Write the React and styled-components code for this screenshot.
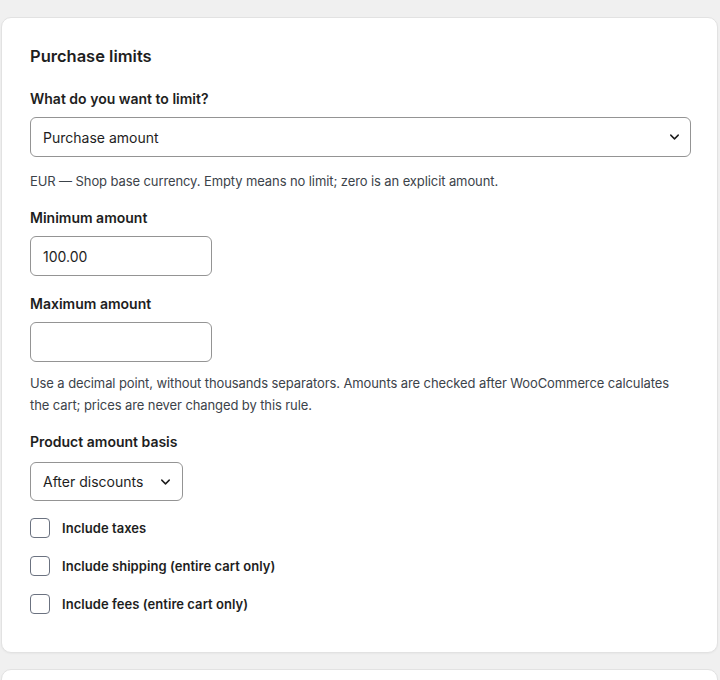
import React from "react";
import styled, { createGlobalStyle } from "styled-components";

const GlobalStyle = createGlobalStyle`
  html, body {
    margin: 0;
    padding: 0;
    background: #f0f0f0;
    font-family: Inter, "Noto Sans", "Liberation Sans", sans-serif;
    color: #1e1e1e;
    -webkit-font-smoothing: antialiased;
  }
  * { box-sizing: border-box; }
`;

const Page = styled.div`
  display: flex;
  flex-direction: column;
  gap: 16px;
  padding: 17px 2px 0 1px;
  height: 680px;
  overflow: hidden;
`;

const Card = styled.section`
  background: #fff;
  border: 1px solid #e2e2e2;
  border-radius: 10px;
  box-shadow: 0 1px 2px rgba(0, 0, 0, 0.04);
  padding: 27px 26px 38px 28px;
  flex-shrink: 0;
  min-height: ${(p) => p.$minHeight || 0}px;
`;

const Title = styled.h2`
  margin: 0 0 22px;
  font-size: 16.5px;
  font-weight: 600;
  line-height: 22px;
  color: #1e1e1e;
`;

const Field = styled.div`
  display: flex;
  flex-direction: column;
  align-items: flex-start;
  margin-bottom: ${(p) => p.$mb ?? 0}px;
`;

const Label = styled.label`
  display: block;
  font-size: 14px;
  font-weight: 600;
  line-height: 20px;
  margin-bottom: ${(p) => p.$mb ?? 8}px;
  color: #1e1e1e;
`;

const SelectBox = styled.div`
  position: relative;
  width: ${(p) => p.$width};
  height: ${(p) => p.$height || 40}px;
  display: flex;
  align-items: center;
  padding: 0 ${(p) => p.$padRight || 40}px 0 12px;
  border: 1px solid #949494;
  border-radius: 6px;
  background: #fff;
  font-size: 14px;
  white-space: nowrap;
  color: #1e1e1e;
`;

const Chevron = styled.svg`
  position: absolute;
  right: ${(p) => p.$right || 10}px;
  top: 50%;
  transform: translateY(-50%);
  width: 15px;
  height: 15px;
`;

const TextInput = styled.input`
  width: 182px;
  height: 40px;
  padding: 0 12px;
  border: 1px solid #949494;
  border-radius: 6px;
  background: #fff;
  font: inherit;
  font-size: 14px;
  color: #1e1e1e;
  outline: none;
`;

const Help = styled.p`
  margin: ${(p) => p.$m || "0"};
  max-width: 650px;
  font-size: 13px;
  line-height: 22px;
  letter-spacing: -0.1px;
  color: #3c434a;
`;

const Checks = styled.div`
  display: flex;
  flex-direction: column;
  gap: 18px;
  margin-top: 17px;
`;

const CheckRow = styled.label`
  display: flex;
  align-items: center;
  gap: 12px;
  font-size: 13px;
  font-weight: 600;
  line-height: 20px;
  letter-spacing: 0.05px;
  color: #1e1e1e;
`;

const Box = styled.span`
  width: 20px;
  height: 20px;
  border: 1.5px solid #6b7280;
  border-radius: 4px;
  background: #fff;
  flex-shrink: 0;
`;

const ChevronDown = ({ right }) => (
  <Chevron $right={right} viewBox="0 0 24 24" fill="none" stroke="#1e1e1e" strokeWidth="2.3" strokeLinecap="round" strokeLinejoin="round">
    <path d="M6 9l6 6 6-6" />
  </Chevron>
);

const checkboxes = [
  "Include taxes",
  "Include shipping (entire cart only)",
  "Include fees (entire cart only)",
];

export default function App() {
  return (
    <>
      <GlobalStyle />
      <Page>
        <Card>
          <Title>Purchase limits</Title>

          <Field>
            <Label>What do you want to limit?</Label>
            <SelectBox $width="100%">
              Purchase amount
              <ChevronDown right={8} />
            </SelectBox>
          </Field>
          <Help $m="13px 0 16px">EUR — Shop base currency. Empty means no limit; zero is an explicit amount.</Help>

          <Field $mb={18}>
            <Label>Minimum amount</Label>
            <TextInput defaultValue="100.00" />
          </Field>

          <Field>
            <Label>Maximum amount</Label>
            <TextInput defaultValue="" />
          </Field>
          <Help $m="10px 0 16px">
            Use a decimal point, without thousands separators. Amounts are checked after WooCommerce calculates the cart; prices are never changed by this rule.
          </Help>

          <Field>
            <Label $mb={10}>Product amount basis</Label>
            <SelectBox $width="153px" $height={39} $padRight={30}>
              After discounts
              <ChevronDown right={9} />
            </SelectBox>
          </Field>

          <Checks>
            {checkboxes.map((c) => (
              <CheckRow key={c}>
                <Box />
                {c}
              </CheckRow>
            ))}
          </Checks>
        </Card>
        <Card $minHeight={80} />
      </Page>
    </>
  );
}
